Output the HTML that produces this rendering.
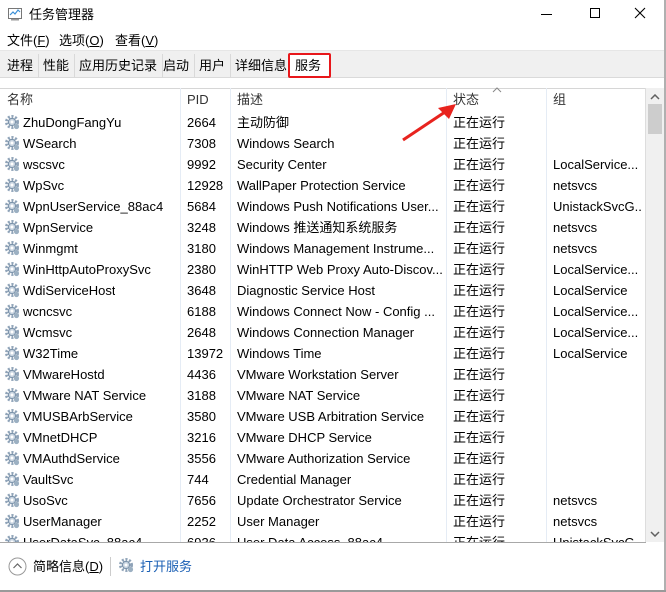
<!DOCTYPE html>
<html><head><meta charset="utf-8"><style>
*{margin:0;padding:0;box-sizing:border-box}
body{width:666px;height:592px;background:#fff;font-family:"Liberation Sans","Noto Sans CJK SC",sans-serif;font-size:13px;line-height:16px;color:#000;position:relative;overflow:hidden}
.abs{position:absolute}
.tabs{left:0;top:50px;width:666px;height:28px;background:#f0f0f0;border-top:1px solid #e6e6e6;border-bottom:1px solid #dadada}
.tab{position:absolute;top:3px;height:24px;line-height:24px;padding:0 5px;border-right:1px solid #d9d9d9;font-size:13px}
.hdr{left:0;top:88px;width:646px;height:23px;border-top:1px solid #d6d6d6}
.hdr span{position:absolute;top:3px;font-size:13px;line-height:16px;color:#333}
.vl{position:absolute;top:88px;width:1px;height:454px;background:#e5ecf5}
.rows{left:0;top:112px;width:646px;height:430px;overflow:hidden}
.row{position:relative;height:21px;line-height:21px;white-space:nowrap}
.row span{position:absolute;top:0;overflow:hidden;line-height:21px}
</style></head><body>
<svg class="abs" style="left:8px;top:7px" width="16" height="14" viewBox="0 0 16 14"><rect x="0.5" y="1.5" width="13" height="10" fill="#fff" stroke="#777"/><polyline points="2,8 5,5 7,7 10,3 12,5" fill="none" stroke="#3a8fd6" stroke-width="1.2"/><rect x="3" y="12" width="8" height="1.5" fill="#999"/></svg>
<div class="abs" style="left:29px;top:7px;font-size:13px">任务管理器</div>
<div class="abs" style="left:541px;top:14px;width:11px;height:1px;background:#000"></div>
<div class="abs" style="left:590px;top:8px;width:10px;height:10px;border:1px solid #000"></div>
<svg class="abs" style="left:634px;top:7px" width="12" height="12"><path d="M1 1L11 11M11 1L1 11" stroke="#000" stroke-width="1.1"/></svg>
<div class="abs" style="left:7px;top:33px">文件(<u>F</u>)</div>
<div class="abs" style="left:59px;top:33px">选项(<u>O</u>)</div>
<div class="abs" style="left:115px;top:33px">查看(<u>V</u>)</div>
<div class="abs tabs">
<div class="tab" style="left:2px">进程</div>
<div class="tab" style="left:38px">性能</div>
<div class="tab" style="left:74px">应用历史记录</div>
<div class="tab" style="left:158px">启动</div>
<div class="tab" style="left:194px">用户</div>
<div class="tab" style="left:230px">详细信息</div>
<div class="tab" style="left:288px;top:2px;height:25px;background:#fff;border:2px solid #e8171b;border-radius:2px;width:43px;line-height:21px">服务</div>
</div>
<div class="abs hdr">
<span style="left:7px">名称</span><span style="left:187px">PID</span><span style="left:237px">描述</span><span style="left:453px">状态</span><span style="left:553px">组</span>
</div>
<svg class="abs" style="left:492px;top:87px" width="10" height="6"><path d="M1 5L5 1L9 5" fill="none" stroke="#888"/></svg>
<div class="vl" style="left:180px"></div><div class="vl" style="left:230px"></div><div class="vl" style="left:446px"></div><div class="vl" style="left:546px"></div><div class="vl" style="left:645px;background:#ddd"></div>
<div class="abs" style="left:646px;top:88px;width:18px;height:454px;background:#f0f0f0"></div>
<div class="abs" style="left:648px;top:104px;width:14px;height:30px;background:#cdcdcd"></div>
<svg class="abs" style="left:650px;top:94px" width="10" height="6"><path d="M1 5L5 1L9 5" fill="none" stroke="#606060" stroke-width="1.5"/></svg>
<svg class="abs" style="left:650px;top:531px" width="10" height="6"><path d="M1 1L5 5L9 1" fill="none" stroke="#606060" stroke-width="1.5"/></svg>
<svg width="0" height="0" style="position:absolute"><defs><g id="gear"><circle cx="7" cy="7" r="5.5" fill="none" stroke="#8fa3b8" stroke-width="3" stroke-dasharray="2 1.6"/><circle cx="7" cy="7" r="3.6" fill="#c8d4e0" stroke="#7890a8"/><circle cx="7" cy="7" r="1.5" fill="#fff"/><circle cx="11.5" cy="11.5" r="2.6" fill="#9cb0c2"/></g></defs></svg>
<div class="abs rows" id="r"></div>
<div class="abs" style="left:0;top:542px;width:646px;height:1px;background:#a8a8a8"></div>
<svg class="abs" style="left:8px;top:557px" width="19" height="19"><circle cx="9.5" cy="9.5" r="8.5" fill="none" stroke="#999"/><path d="M5.5 11L9.5 7L13.5 11" fill="none" stroke="#666" stroke-width="1.2"/></svg>
<div class="abs" style="left:33px;top:559px">简略信息(<u>D</u>)</div>
<div class="abs" style="left:110px;top:557px;width:1px;height:19px;background:#ccc"></div>
<svg class="abs" style="left:119px;top:558px" width="16" height="16"><use href="#gear"/></svg>
<div class="abs" style="left:140px;top:559px;color:#1a5fb4">打开服务</div>
<div class="abs" style="left:664px;top:0;width:2px;height:592px;background:#b0b0b0"></div>
<div class="abs" style="left:0;top:590px;width:666px;height:2px;background:#9a9a9a"></div>
<svg class="abs" style="left:400px;top:100px" width="60" height="45"><path d="M3 40L48 10" stroke="#e8231e" stroke-width="3"/><path d="M56 4L38 8L49 19Z" fill="#e8231e"/></svg>
<script>
var d=[["ZhuDongFangYu","2664","主动防御",""],["WSearch","7308","Windows Search",""],["wscsvc","9992","Security Center","LocalService..."],["WpSvc","12928","WallPaper Protection Service","netsvcs"],["WpnUserService_88ac4","5684","Windows Push Notifications User...","UnistackSvcG..."],["WpnService","3248","Windows 推送通知系统服务","netsvcs"],["Winmgmt","3180","Windows Management Instrume...","netsvcs"],["WinHttpAutoProxySvc","2380","WinHTTP Web Proxy Auto-Discov...","LocalService..."],["WdiServiceHost","3648","Diagnostic Service Host","LocalService"],["wcncsvc","6188","Windows Connect Now - Config ...","LocalService..."],["Wcmsvc","2648","Windows Connection Manager","LocalService..."],["W32Time","13972","Windows Time","LocalService"],["VMwareHostd","4436","VMware Workstation Server",""],["VMware NAT Service","3188","VMware NAT Service",""],["VMUSBArbService","3580","VMware USB Arbitration Service",""],["VMnetDHCP","3216","VMware DHCP Service",""],["VMAuthdService","3556","VMware Authorization Service",""],["VaultSvc","744","Credential Manager",""],["UsoSvc","7656","Update Orchestrator Service","netsvcs"],["UserManager","2252","User Manager","netsvcs"],["UserDataSvc_88ac4","6936","User Data Access_88ac4","UnistackSvcG..."]];
var h="";d.forEach(function(r){h+='<div class="row"><svg style="position:absolute;left:5px;top:3px" width="16" height="16"><use href="#gear"/></svg><span style="left:23px">'+r[0]+'</span><span style="left:187px">'+r[1]+'</span><span style="left:237px;width:205px">'+r[2]+'</span><span style="left:453px">正在运行</span><span style="left:553px;width:90px">'+r[3]+'</span></div>';});
document.getElementById("r").innerHTML=h;
</script>
</body></html>
